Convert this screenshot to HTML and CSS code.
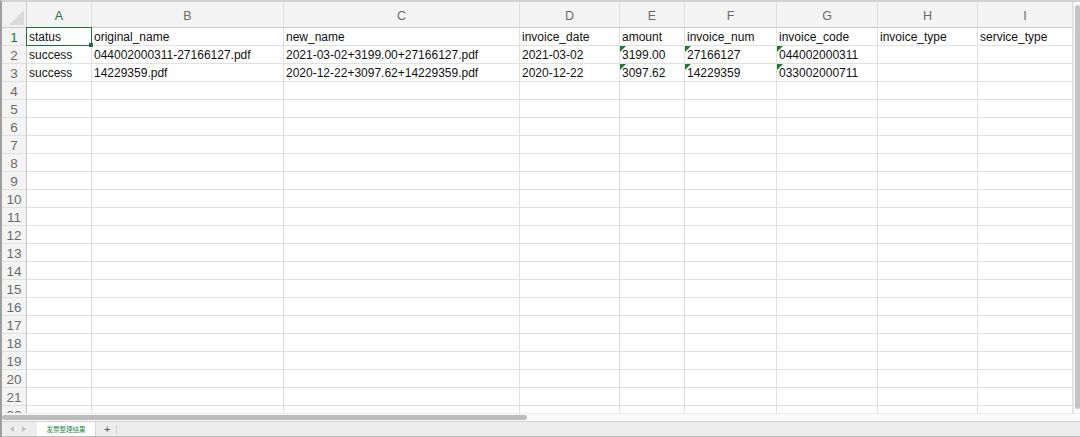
FILE: index.html
```html
<!DOCTYPE html>
<html lang="zh">
<head>
  <meta charset="UTF-8" />
  <meta name="viewport" content="width=device-width, initial-scale=1" />
  <title>发票整理结果</title>
  <link rel="stylesheet" href="styles.css">
</head>
<body>
  <div class="sheet">
    <div class="sheet-body">
      <div class="grid" id="grid">
        <!-- cells are built below -->
      </div>
      <div class="vscroll"><div class="vthumb"></div></div>
    </div>
    <div class="hscroll"><div class="hthumb"></div></div>
    <div class="tabs">
      <span class="arrow arrow-left"></span>
      <span class="arrow arrow-right"></span>
      <div class="tab">发票整理结果</div>
      <span class="add-tab">+</span>
      <span class="tab-sep"></span>
    </div>
  </div>

  <script>
    const columns = ['A', 'B', 'C', 'D', 'E', 'F', 'G', 'H', 'I'];
    const totalRows = 22;

    // text stored as number-like strings gets the little green corner flag
    const rows = [
      ['status', 'original_name', 'new_name', 'invoice_date', 'amount', 'invoice_num', 'invoice_code', 'invoice_type', 'service_type'],
      ['success', '044002000311-27166127.pdf', '2021-03-02+3199.00+27166127.pdf', '2021-03-02', '#3199.00', '#27166127', '#044002000311', '', ''],
      ['success', '14229359.pdf', '2020-12-22+3097.62+14229359.pdf', '2020-12-22', '#3097.62', '#14229359', '#033002000711', '', '']
    ];

    const grid = document.getElementById('grid');

    function addCell(cls, text) {
      const el = document.createElement('div');
      el.className = cls;
      el.textContent = text;
      grid.appendChild(el);
      return el;
    }

    addCell('corner', '');
    columns.forEach((c, i) => {
      addCell(i === 0 ? 'col-head active' : 'col-head', c);
    });

    for (let r = 1; r <= totalRows; r++) {
      addCell(r === 1 ? 'row-head active' : 'row-head', r);
      const data = rows[r - 1] || [];
      columns.forEach((c, i) => {
        let value = data[i] || '';
        let cls = 'cell';
        if (value.startsWith('#')) {
          value = value.slice(1);
          cls += ' flagged';
        }
        if (r === 1 && i === 0) cls += ' selected';
        addCell(cls, value);
      });
    }
  </script>
</body>
</html>
```

FILE: styles.css
```css
* {
  box-sizing: border-box;
  margin: 0;
  padding: 0;
}
body {
  background: #ffffff;
  font-family: 'Liberation Sans', Arial, sans-serif;
  height: 437px;
  overflow: hidden;
}
.sheet {
  display: flex;
  flex-direction: column;
  height: 437px;
  border-top: 2px solid #d3d3d3;
  border-left: 2px solid #9f9f9f;
}
.sheet-body {
  display: flex;
  height: 411px;
  overflow: hidden;
}
.grid {
  display: grid;
  grid-template-columns: 25px 65px 192px 236px 100px 65px 92px 101px 100px 95px;
  grid-template-rows: 26px repeat(22, 18px);
  flex: none;
  width: 1071px;
}
.corner {
  position: relative;
  background: #f1f1f1;
  border-right: 1px solid #cdcdcd;
  border-bottom: 1px solid #cdcdcd;
}
.corner::after {
  content: '';
  position: absolute;
  right: 2px;
  bottom: 2px;
  border-style: solid;
  border-width: 0 0 15px 15px;
  border-color: transparent transparent #dadada transparent;
}
.col-head {
  background: #f4f4f4;
  border-right: 1px solid #e0e0e0;
  border-bottom: 1px solid #cdcdcd;
  color: #6b6b6b;
  font-size: 12.5px;
  text-align: center;
  line-height: 28px;
  overflow: hidden;
}
.row-head {
  background: #f4f4f4;
  border-right: 1px solid #c8c8c8;
  border-bottom: 1px solid #e0e0e0;
  color: #6b6b6b;
  font-size: 13.5px;
  text-align: center;
  line-height: 20px;
  overflow: hidden;
}
.col-head.active,
.row-head.active {
  color: #217346;
}
.cell {
  position: relative;
  border-right: 1px solid #e1e1e1;
  border-bottom: 1px solid #e1e1e1;
  padding: 0 2px;
  color: #111111;
  font-size: 12px;
  line-height: 19px;
  white-space: nowrap;
  overflow: hidden;
}
.cell.flagged::before {
  content: '';
  position: absolute;
  left: 0;
  top: 0;
  border-style: solid;
  border-width: 6px 6px 0 0;
  border-color: #1b7b35 transparent transparent transparent;
}
.cell.selected {
  overflow: visible;
  z-index: 1;
}
/* green frame round the active cell, with the fill handle */
.cell.selected::after {
  content: '';
  position: absolute;
  left: -1px;
  top: -1px;
  right: -1px;
  bottom: -1px;
  border: 1px solid #1e6f42;
}
.cell.selected::before {
  content: '';
  position: absolute;
  right: -3px;
  bottom: -3px;
  width: 4px;
  height: 4px;
  background: #1e6f42;
  border: 1px solid #ffffff;
}
.vscroll {
  flex: 1;
  position: relative;
  border-left: 1px solid #e6e6e6;
  background: #fbfbfb;
}
.vthumb {
  position: absolute;
  left: 1px;
  top: 3px;
  bottom: 4px;
  width: 5px;
  border-radius: 3px;
  background: #c4c4c4;
}
.hscroll {
  position: relative;
  height: 8px;
  background: #fafafa;
  border-top: 1px solid #ececec;
}
.hthumb {
  position: absolute;
  left: 0;
  top: 1px;
  width: 525px;
  height: 5px;
  border-radius: 3px;
  background: #bcbcbc;
}
.tabs {
  display: flex;
  align-items: stretch;
  height: 16px;
  background: #ededed;
  border-top: 1px solid #d2d2d2;
  border-bottom: 1px solid #bdbdbd;
}
.arrow {
  align-self: center;
  width: 0;
  height: 0;
  border-style: solid;
}
.arrow-left {
  margin-left: 8px;
  border-width: 3px 4px 3px 0;
  border-color: transparent #c2c2c2 transparent transparent;
}
.arrow-right {
  margin-left: 8px;
  border-width: 3px 0 3px 4px;
  border-color: transparent transparent transparent #c2c2c2;
}
.tab {
  margin-left: 11px;
  width: 59px;
  background: #ffffff;
  color: #2f8a4f;
  font-family: 'Noto Sans CJK SC', sans-serif;
  font-size: 6.5px;
  line-height: 14px;
  text-align: center;
  border-right: 1px solid #d6d6d6;
}
.add-tab {
  margin-left: 8px;
  color: #5a5a5a;
  font-size: 11px;
  line-height: 14px;
}
.tab-sep {
  align-self: center;
  margin-left: 6px;
  width: 1px;
  height: 9px;
  background: #d0d0d0;
}
```
